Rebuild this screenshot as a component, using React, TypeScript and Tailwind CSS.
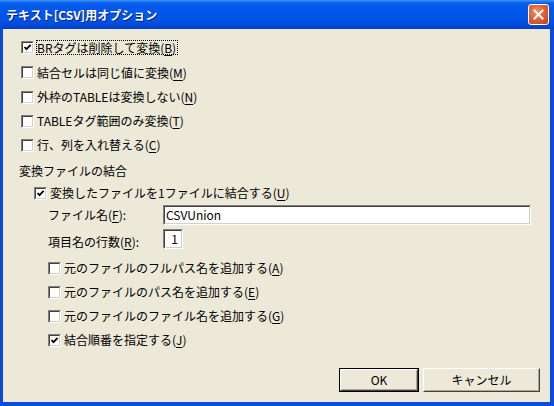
import type { ReactNode } from "react";

function Check({ checked }: { checked?: boolean }) {
  return (
    <div className="w-[13px] h-[13px] shrink-0 border border-t-[#808080] border-l-[#808080] border-b-white border-r-white">
      <div className="w-full h-full bg-white border border-t-[#404040] border-l-[#404040] border-b-[#d4d0c8] border-r-[#d4d0c8] flex items-center justify-center">
        {checked && (
          <svg width="9" height="9" viewBox="0 0 9 9">
            <path d="M1.5 4 L3.5 6.2 L7.6 1.8" fill="none" stroke="#000" strokeWidth="1.8" />
          </svg>
        )}
      </div>
    </div>
  );
}

function Row({
  checked,
  h,
  focus,
  children,
}: {
  checked?: boolean;
  h: string;
  focus?: boolean;
  children: ReactNode;
}) {
  return (
    <div className={`flex items-center ${h}`}>
      <Check checked={checked} />
      {focus ? (
        <span className="ml-[2px] border border-dotted border-black leading-[13px] pr-[1px]">
          {children}
        </span>
      ) : (
        <span className="ml-[3px] leading-[14px]">{children}</span>
      )}
    </div>
  );
}

function Key({ k }: { k: string }) {
  return (
    <>
      (<u className="underline-offset-[2px]">{k}</u>)
    </>
  );
}

function Sunken({ className, children }: { className: string; children?: ReactNode }) {
  return (
    <div className={`border border-t-[#808080] border-l-[#808080] border-b-white border-r-white ${className}`}>
      <div className="w-full h-full bg-white border border-t-[#404040] border-l-[#404040] border-b-[#d4d0c8] border-r-[#d4d0c8] flex items-center">
        {children}
      </div>
    </div>
  );
}

function Button({ label, primary, w }: { label: string; primary?: boolean; w: string }) {
  return (
    <div className={`${w} h-[24px] ${primary ? "border border-black" : ""}`}>
      <div className="w-full h-full border border-t-white border-l-white border-b-[#404040] border-r-[#404040]">
        <div className="w-full h-full border border-t-[#ece9d8] border-l-[#ece9d8] border-b-[#aca899] border-r-[#aca899] flex items-center justify-center">
          {label}
        </div>
      </div>
    </div>
  );
}

export default function App() {
  return (
    <div className="w-[554px] h-[406px] flex flex-col bg-[#0a4bdb] text-[12px] text-black font-['Noto_Sans_CJK_JP','Noto_Sans_CJK_SC',sans-serif] overflow-hidden">
      {/* title bar */}
      <div className="h-[29px] shrink-0 flex items-center justify-between pl-[6px] pr-[5px] bg-[linear-gradient(to_bottom,#3d95ff_0px,#0a5ee8_3px,#0058ee_8px,#0054e3_20px,#0048d8_26px,#003cc4_29px)]">
        <span className="text-white font-bold text-[12px] leading-none [text-shadow:1px_1px_0_#0a1e8a]">
          テキスト[CSV]用オプション
        </span>
        <div className="w-[21px] h-[21px] rounded-[3px] border border-white bg-[radial-gradient(circle_at_40%_35%,#f0906a_0%,#dd5a30_55%,#c0401a_100%)] flex items-center justify-center">
          <svg width="11" height="11" viewBox="0 0 11 11">
            <path d="M1.5 1.5 L9.5 9.5 M9.5 1.5 L1.5 9.5" stroke="#fff" strokeWidth="2" strokeLinecap="square" />
          </svg>
        </div>
      </div>

      {/* client area */}
      <div className="flex-1 ml-[3px] mr-[4px] mb-[4px] bg-[#ece9d8] flex flex-col pt-[6px]">
        <div className="pl-[18px] flex flex-col">
          <Row h="h-[25px]" checked focus>
            BRタグは削除して変換<Key k="B" />
          </Row>
          <Row h="h-[25px]">
            結合セルは同じ値に変換<Key k="M" />
          </Row>
          <Row h="h-[24px]">
            外枠のTABLEは変換しない<Key k="N" />
          </Row>
          <Row h="h-[24px]">
            TABLEタグ範囲のみ変換<Key k="T" />
          </Row>
          <Row h="h-[24px]">
            行、列を入れ替える<Key k="C" />
          </Row>
        </div>

        <div className="pl-[16px] h-[27px] flex items-center">変換ファイルの結合</div>

        <div className="pl-[31px]">
          <Row h="h-[18px]" checked>
            変換したファイルを1ファイルに結合する<Key k="U" />
          </Row>
        </div>

        <div className="pl-[45px] mt-[3px] flex items-center h-[20px]">
          <span className="w-[115px]">
            ファイル名<Key k="F" />:
          </span>
          <Sunken className="w-[368px] h-[20px]">
            <span className="pl-[1px] leading-none">CSVUnion</span>
          </Sunken>
        </div>

        <div className="pl-[45px] mt-[4px] flex items-center h-[20px]">
          <span className="w-[115px] pt-[5px]">
            項目名の行数<Key k="R" />:
          </span>
          <Sunken className="w-[20px] h-[20px]">
            <span className="w-full text-right pr-[3px] leading-none">1</span>
          </Sunken>
        </div>

        <div className="pl-[45px] mt-[7px] flex flex-col">
          <Row h="h-[24px]">
            元のファイルのフルパス名を追加する<Key k="A" />
          </Row>
          <Row h="h-[24px]">
            元のファイルのパス名を追加する<Key k="E" />
          </Row>
          <Row h="h-[24px]">
            元のファイルのファイル名を追加する<Key k="G" />
          </Row>
          <Row h="h-[24px]" checked>
            結合順番を指定する<Key k="J" />
          </Row>
        </div>

        <div className="mt-auto flex justify-end gap-[4px] pr-[10px] pb-[10px]">
          <Button label="OK" primary w="w-[80px]" />
          <Button label="キャンセル" w="w-[117px]" />
        </div>
      </div>
    </div>
  );
}
